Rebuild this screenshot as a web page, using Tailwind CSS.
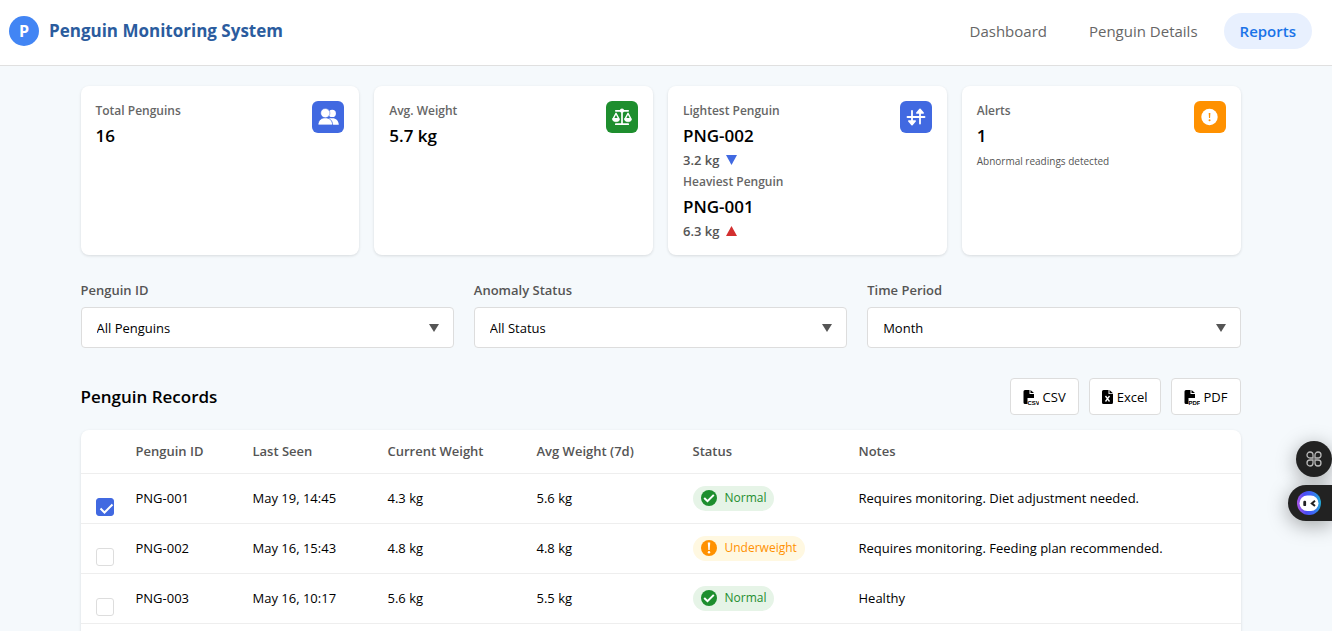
<!DOCTYPE html>
<html lang="en">
<head>
<meta charset="utf-8">
<meta name="viewport" content="width=device-width, initial-scale=1">
<title>Penguin Monitoring System</title>
<script src="https://cdn.jsdelivr.net/npm/@tailwindcss/browser@4"></script>
</head>
<body class="h-screen overflow-hidden bg-[#f5f9fc] font-['Segoe_UI','Open_Sans',sans-serif] text-[13px] leading-5 text-black">

<header class="flex h-[66px] items-center justify-between border-b border-[#e0e0e0] bg-white pr-5 pl-[9px] pb-[3px]">
  <div class="flex items-center gap-[10px]">
    <span class="flex size-[30px] items-center justify-center rounded-full bg-[#4285f4] text-base font-bold text-white">P</span>
    <h1 class="text-[17px] font-bold text-[#2b5c9e]">Penguin Monitoring System</h1>
  </div>
  <nav class="flex items-center gap-[10px] text-[15px] text-[#666]">
    <a href="#" class="rounded-full px-4 py-2">Dashboard</a>
    <a href="#" class="rounded-full px-4 py-2">Penguin Details</a>
    <a href="#" class="rounded-full bg-[#e8f0fe] px-4 py-2 font-semibold text-[#1a73e8]" aria-current="page">Reports</a>
  </nav>
</header>

<main class="pt-5 pr-[11px]">
  <div class="mx-auto max-w-[1160px]">

    <section class="grid grid-cols-4 gap-[15px]">
      <article class="flex min-h-[169px] items-start justify-between rounded-lg bg-white p-[15px] shadow-[0_1px_3px_rgba(0,0,0,0.12)]">
        <div>
          <h2 class="text-[12px] font-semibold text-[#666]">Total Penguins</h2>
          <p class="mt-[3px] text-[17px] leading-6 font-semibold">16</p>
        </div>
        <svg class="size-8 rounded-md bg-[#4169e1]" viewBox="0 0 32 32" fill="#fff" aria-hidden="true">
          <circle cx="20.200" cy="12.400" r="3.700"/>
          <path d="M17 17.200h3.500c3.500 0 6.200 2.600 6.300 6.600H17z"/>
          <path d="M6 24c0-4.500 3.200-7.300 7.300-7.300s7.300 2.800 7.300 7.300z" stroke="#4169e1" stroke-width=".8"/>
          <circle cx="13.300" cy="12.100" r="4.600" stroke="#4169e1" stroke-width=".5"/>
        </svg>
      </article>

      <article class="flex min-h-[169px] items-start justify-between rounded-lg bg-white p-[15px] shadow-[0_1px_3px_rgba(0,0,0,0.12)]">
        <div>
          <h2 class="text-[12px] font-semibold text-[#666]">Avg. Weight</h2>
          <p class="mt-[3px] text-[17px] leading-6 font-semibold">5.7 kg</p>
        </div>
        <svg class="size-8 rounded-md bg-[#1e8e2e]" viewBox="0 0 32 32" fill="none" stroke="#fff" stroke-width="1.700" stroke-linecap="round" stroke-linejoin="round" aria-hidden="true">
          <path d="M9.800 9.800h12.400M16 9v14M9.800 23.200h12.400"/>
          <circle cx="16" cy="9.700" r="1.300" fill="#fff"/>
          <path d="M10 12.300l-2.900 5.500h5.800zM22 12.300l-2.900 5.500h5.800z" stroke-width="1.400"/>
          <path d="M6.500 18h7a3.500 2.800 0 0 1-7 0zM18.500 18h7a3.500 2.800 0 0 1-7 0z" fill="#fff" stroke-width=".6"/>
        </svg>
      </article>

      <article class="flex min-h-[169px] items-start justify-between rounded-lg bg-white px-[15px] pt-[15px] pb-[14px] shadow-[0_1px_3px_rgba(0,0,0,0.12)]">
        <div>
          <h2 class="text-[12px] font-semibold text-[#666]">Lightest Penguin</h2>
          <p class="mt-[3px] text-[17px] leading-6 font-semibold">PNG-002</p>
          <p class="mt-[2px] flex items-center gap-[7px] font-semibold text-[#555]">3.2 kg
            <svg class="h-[10px] w-[11px]" viewBox="0 0 11 10" fill="#4169e1" aria-hidden="true"><path d="M0 0h11L5.500 10z"/></svg></p>
          <h2 class="mt-[2px] text-[12px] font-semibold text-[#666]">Heaviest Penguin</h2>
          <p class="mt-[3px] text-[17px] leading-6 font-semibold">PNG-001</p>
          <p class="mt-[2px] flex items-center gap-[7px] font-semibold text-[#555]">6.3 kg
            <svg class="h-[10px] w-[11px]" viewBox="0 0 11 10" fill="#d32f2f" aria-hidden="true"><path d="M0 10h11L5.500 0z"/></svg></p>
        </div>
        <svg class="size-8 rounded-md bg-[#4169e1]" viewBox="0 0 32 32" fill="none" stroke="#fff" stroke-width="1.800" stroke-linejoin="round" stroke-linecap="round" aria-hidden="true">
          <path d="M7.500 16h17M12 9.800V22M20 22.500V10"/>
          <path d="M8.800 20h6.400L12 23.600zM16.800 12h6.400L20 8.400z" fill="#fff" stroke-width="1.600"/>
        </svg>
      </article>

      <article class="flex min-h-[169px] items-start justify-between rounded-lg bg-white p-[15px] shadow-[0_1px_3px_rgba(0,0,0,0.12)]">
        <div>
          <h2 class="text-[12px] font-semibold text-[#666]">Alerts</h2>
          <p class="mt-[3px] text-[17px] leading-6 font-semibold">1</p>
          <p class="mt-[3px] text-[10px] text-[#555]">Abnormal readings detected</p>
        </div>
        <svg class="size-8 rounded-md bg-[#ff9100]" viewBox="0 0 32 32" aria-hidden="true">
          <circle cx="15.500" cy="16" r="8.200" fill="#fff"/>
          <path d="M14.700 12h1.700l-.3 5h-1.100z" fill="#ff9100"/><circle cx="15.550" cy="19.200" r="1" fill="#ff9100"/>
        </svg>
      </article>
    </section>

    <section class="mt-[25px] grid grid-cols-3 gap-5">
      <div>
        <label for="penguin" class="block font-semibold text-[#555]">Penguin ID</label>
        <div class="relative mt-[7px]">
          <select id="penguin" class="block h-[41px] w-full appearance-none rounded border border-[#ddd] bg-white px-[15px]"><option>All Penguins</option></select>
          <svg class="pointer-events-none absolute top-[17px] right-[15px] h-2 w-[10px]" viewBox="0 0 10 8" fill="#555" aria-hidden="true"><path d="M0 0h10L5 8z"/></svg>
        </div>
      </div>
      <div>
        <label for="status" class="block font-semibold text-[#555]">Anomaly Status</label>
        <div class="relative mt-[7px]">
          <select id="status" class="block h-[41px] w-full appearance-none rounded border border-[#ddd] bg-white px-[15px]"><option>All Status</option></select>
          <svg class="pointer-events-none absolute top-[17px] right-[15px] h-2 w-[10px]" viewBox="0 0 10 8" fill="#555" aria-hidden="true"><path d="M0 0h10L5 8z"/></svg>
        </div>
      </div>
      <div>
        <label for="period" class="block font-semibold text-[#555]">Time Period</label>
        <div class="relative mt-[7px]">
          <select id="period" class="block h-[41px] w-full appearance-none rounded border border-[#ddd] bg-white px-[15px]"><option>Month</option></select>
          <svg class="pointer-events-none absolute top-[17px] right-[15px] h-2 w-[10px]" viewBox="0 0 10 8" fill="#555" aria-hidden="true"><path d="M0 0h10L5 8z"/></svg>
        </div>
      </div>
    </section>

    <section class="mt-[30px]">
      <div class="flex items-center justify-between">
        <h2 class="text-[17px] leading-6 font-semibold">Penguin Records</h2>
        <div class="flex gap-[10px]">
          <button type="button" class="flex h-[37px] items-center gap-1 rounded border border-[#ddd] bg-white px-3">
            <svg class="size-4" viewBox="0 0 16 16" aria-hidden="true"><path d="M2 1h4.500v4h4.500v4H4.500v6H2Q.5 15 .5 13.500v-11Q.5 1 2 1zM7.500 1L11 4H7.500z"/><text x="4.500" y="15.500" font-family="Liberation Sans" font-size="6" font-weight="700">CSV</text></svg>
            CSV
          </button>
          <button type="button" class="flex h-[37px] items-center gap-1 rounded border border-[#ddd] bg-white px-3">
            <svg class="h-[14px] w-[11px]" viewBox="0 0 11 14" aria-hidden="true"><path d="M1.500 0H6.500v4H11v8.500Q11 14 9.500 14h-8Q0 14 0 12.500v-11Q0 0 1.500 0zM7.500 0L11 3.200H7.500z"/><path d="M3.500 6l4 5.500M7.500 6l-4 5.500" stroke="#fff" stroke-width="1.300"/></svg>
            Excel
          </button>
          <button type="button" class="flex h-[37px] items-center gap-1 rounded border border-[#ddd] bg-white px-3">
            <svg class="size-4" viewBox="0 0 16 16" aria-hidden="true"><path d="M2 1h4.500v4h4.500v4H4.500v6H2Q.5 15 .5 13.500v-11Q.5 1 2 1zM7.500 1L11 4H7.500z"/><text x="4.500" y="15.500" font-family="Liberation Sans" font-size="6" font-weight="700">PDF</text></svg>
            PDF
          </button>
        </div>
      </div>

      <div class="mt-[15px] overflow-hidden rounded-lg bg-white shadow-[0_1px_3px_rgba(0,0,0,0.12)]">
        <table class="w-full table-fixed text-left">
          <colgroup><col class="w-10"><col class="w-[117px]"><col class="w-[135px]"><col class="w-[149px]"><col class="w-[156px]"><col class="w-[166px]"><col></colgroup>
          <thead>
            <tr class="h-[43px] border-b border-[#eee] text-[#555]">
              <th></th><th class="px-[15px] font-semibold">Penguin ID</th><th class="px-[15px] font-semibold">Last Seen</th><th class="px-[15px] font-semibold">Current Weight</th><th class="px-[15px] font-semibold">Avg Weight (7d)</th><th class="px-[15px] font-semibold">Status</th><th class="px-[15px] font-semibold">Notes</th>
            </tr>
          </thead>
          <tbody>
            <tr class="h-[50px] border-b border-[#eee]">
              <td class="pt-[18px] pl-[15px]"><span class="grid size-[18px]"><input type="checkbox" checked aria-label="Select PNG-001" class="peer col-start-1 row-start-1 size-[18px] appearance-none rounded-[3px] border border-[#ddd] bg-white checked:border-[#4169e1] checked:bg-[#4169e1]"><svg class="pointer-events-none invisible col-start-1 row-start-1 size-[18px] peer-checked:visible" viewBox="0 0 18 18" fill="none" stroke="#fff" stroke-width="2" aria-hidden="true"><path d="M4.500 10.500l4 4 8-8"/></svg></span></td>
              <td class="px-[15px]">PNG-001</td><td class="px-[15px]">May 19, 14:45</td><td class="px-[15px]">4.3 kg</td><td class="px-[15px]">5.6 kg</td>
              <td class="px-[15px]"><span class="inline-flex h-[25px] items-center gap-2 rounded-full bg-[#e6f4e7] px-2 align-middle text-[12px] font-medium text-[#1e8e2e]"><svg class="size-4" viewBox="0 0 16 16" aria-hidden="true"><circle cx="8" cy="8" r="8" fill="#1e8e2e"/><path d="M3.200 8l3.300 3.200 6.300-6.300" fill="none" stroke="#fff" stroke-width="2"/></svg>Normal</span></td>
              <td class="px-[15px]">Requires monitoring. Diet adjustment needed.</td>
            </tr>
            <tr class="h-[50px] border-b border-[#eee]">
              <td class="pt-[18px] pl-[15px]"><span class="grid size-[18px]"><input type="checkbox" aria-label="Select PNG-002" class="peer col-start-1 row-start-1 size-[18px] appearance-none rounded-[3px] border border-[#ddd] bg-white checked:border-[#4169e1] checked:bg-[#4169e1]"><svg class="pointer-events-none invisible col-start-1 row-start-1 size-[18px] peer-checked:visible" viewBox="0 0 18 18" fill="none" stroke="#fff" stroke-width="2" aria-hidden="true"><path d="M4.500 10.500l4 4 8-8"/></svg></span></td>
              <td class="px-[15px]">PNG-002</td><td class="px-[15px]">May 16, 15:43</td><td class="px-[15px]">4.8 kg</td><td class="px-[15px]">4.8 kg</td>
              <td class="px-[15px]"><span class="inline-flex h-[25px] items-center gap-2 rounded-full bg-[#fff8e1] px-2 align-middle text-[12px] font-medium text-[#ff9100]"><svg class="size-4" viewBox="0 0 16 16" aria-hidden="true"><circle cx="8" cy="8" r="8" fill="#ff9100"/><path d="M6.800 2.500h2.400L8.700 10H7.300z" fill="#fff"/><circle cx="8" cy="12.300" r="1.200" fill="#fff"/></svg>Underweight</span></td>
              <td class="px-[15px]">Requires monitoring. Feeding plan recommended.</td>
            </tr>
            <tr class="h-[50px] border-b border-[#eee]">
              <td class="pt-[18px] pl-[15px]"><span class="grid size-[18px]"><input type="checkbox" aria-label="Select PNG-003" class="peer col-start-1 row-start-1 size-[18px] appearance-none rounded-[3px] border border-[#ddd] bg-white checked:border-[#4169e1] checked:bg-[#4169e1]"><svg class="pointer-events-none invisible col-start-1 row-start-1 size-[18px] peer-checked:visible" viewBox="0 0 18 18" fill="none" stroke="#fff" stroke-width="2" aria-hidden="true"><path d="M4.500 10.500l4 4 8-8"/></svg></span></td>
              <td class="px-[15px]">PNG-003</td><td class="px-[15px]">May 16, 10:17</td><td class="px-[15px]">5.6 kg</td><td class="px-[15px]">5.5 kg</td>
              <td class="px-[15px]"><span class="inline-flex h-[25px] items-center gap-2 rounded-full bg-[#e6f4e7] px-2 align-middle text-[12px] font-medium text-[#1e8e2e]"><svg class="size-4" viewBox="0 0 16 16" aria-hidden="true"><circle cx="8" cy="8" r="8" fill="#1e8e2e"/><path d="M3.200 8l3.300 3.200 6.300-6.300" fill="none" stroke="#fff" stroke-width="2"/></svg>Normal</span></td>
              <td class="px-[15px]">Healthy</td>
            </tr>
            <tr class="h-[50px]"><td colspan="7"></td></tr>
          </tbody>
        </table>
      </div>
    </section>
  </div>
</main>

<aside class="fixed right-0 bottom-[110px] flex flex-col items-end gap-2">
  <button type="button" aria-label="Apps" class="flex size-9 items-center justify-center rounded-full bg-[#222] shadow-[0_4px_20px_rgba(0,0,0,0.35)]">
    <svg class="size-4" viewBox="0 0 16 16" fill="none" stroke="#bbb" stroke-width="1.300" aria-hidden="true"><path d="M7 7H4a3 3 0 1 1 3-3zM9 7V4a3 3 0 1 1 3 3zM7 9v3a3 3 0 1 1-3-3zM9 9h3a3 3 0 1 1-3 3z"/></svg>
  </button>
  <button type="button" aria-label="Assistant" class="flex h-9 w-11 items-center rounded-l-full bg-[#222] pl-[9px] shadow-[0_4px_20px_rgba(0,0,0,0.35)]">
    <svg class="size-6" viewBox="0 0 24 24" aria-hidden="true"><defs><linearGradient id="ring" x1="0" y1=".7" x2="1" y2=".6"><stop offset="0" stop-color="#b055e8"/><stop offset=".35" stop-color="#4b4cf5"/><stop offset=".7" stop-color="#3b6cf5"/><stop offset="1" stop-color="#22a8d8"/></linearGradient></defs><circle cx="12" cy="12" r="12" fill="url(#ring)"/><rect x="2.500" y="4.500" width="19" height="15.500" rx="7.700" fill="#fff"/><rect x="6.300" y="9.700" width="2.800" height="5.400" rx="1.200" fill="#222"/><path d="M18 9.800l-3.200 2.600 3.200 2.600" fill="none" stroke="#222" stroke-width="2"/></svg>
  </button>
</aside>
</body>
</html>
